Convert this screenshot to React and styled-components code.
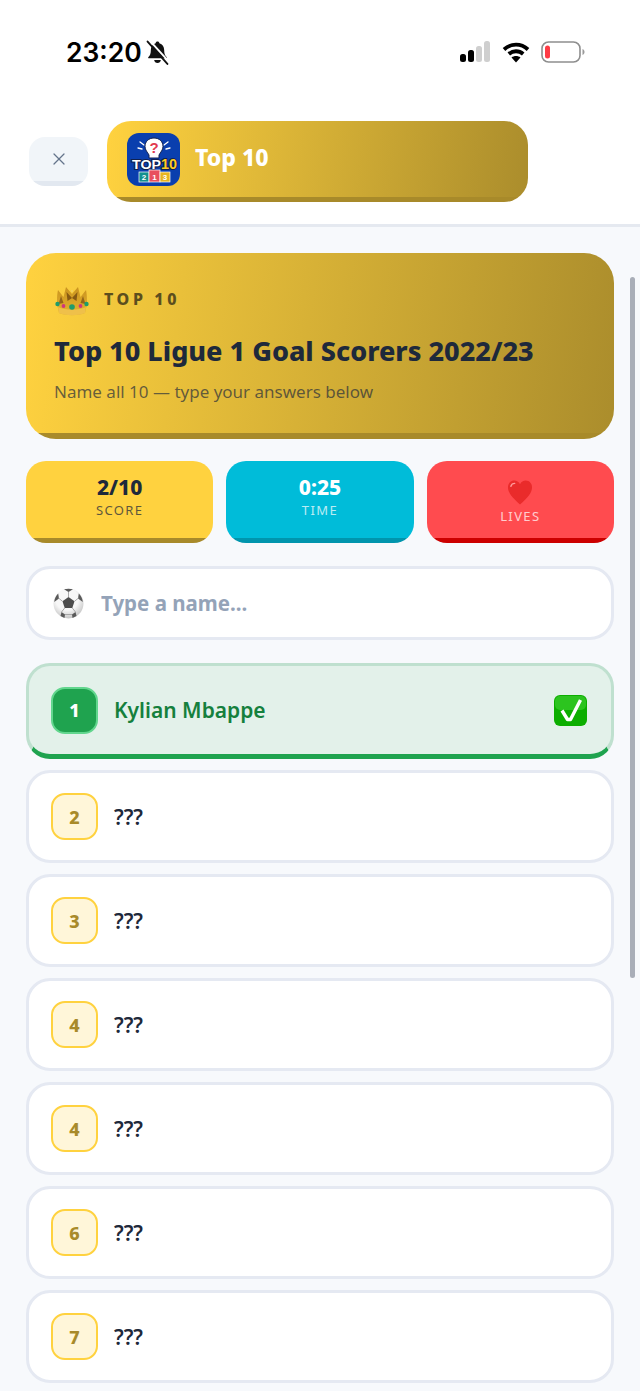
import React from 'react';
import styled, { createGlobalStyle } from 'styled-components';
import { X } from 'lucide-react';

const GlobalStyle = createGlobalStyle`
  html, body {
    margin: 0;
    padding: 0;
    background: #f7f9fc;
  }
  * {
    box-sizing: border-box;
  }
`;

const GOLD = 'linear-gradient(97deg, #ffd23f 0%, #ab8d2c 100%)';

// flat strip along the bottom edge, clipped by the corners of the card
const edgeStrip = (color, size) =>
  `linear-gradient(${color}, ${color}) bottom / 100% ${size}px no-repeat`;

// --- Page ---

const Page = styled.div`
  position: relative;
  width: 640px;
  height: 1391px;
  overflow: hidden;
  display: flex;
  flex-direction: column;
  background: #f7f9fc;
  font-family: 'Noto Sans', 'Open Sans', sans-serif;
  color: #1e293b;
`;

const StatusBar = styled.div`
  height: 100px;
  flex-shrink: 0;
  background: #fff;
  display: flex;
  justify-content: space-between;
  align-items: flex-start;
  padding: 36px 55px 0 66px;
`;

const StatusLeft = styled.div`
  display: flex;
  align-items: center;
  gap: 3px;
`;

const Clock = styled.span`
  font-family: Inter, sans-serif;
  font-size: 26.5px;
  line-height: 32px;
  font-weight: 600;
  color: #000;
`;

const StatusRight = styled.div`
  display: flex;
  align-items: center;
  gap: 11px;
  padding-top: 5px;
`;

const Header = styled.header`
  flex-shrink: 0;
  background: #fff;
  border-bottom: 3px solid #e5e9f0;
  display: flex;
  align-items: center;
  gap: 19px;
  padding: 21px 0 22px 29px;
`;

const CloseButton = styled.button`
  width: 59px;
  height: 49px;
  padding: 0 0 5px;
  border: 0;
  border-radius: 16px;
  background: ${edgeStrip('#e2e8f0', 5)}, #f1f5f9;
  color: #64748b;
  display: flex;
  align-items: center;
  justify-content: center;
`;

const GamePill = styled.div`
  width: 421px;
  height: 81px;
  border-radius: 24px;
  background: ${edgeStrip('#a88a2a', 5)}, ${GOLD};
  display: flex;
  align-items: center;
  gap: 15px;
  padding: 0 0 5px 20px;
`;

const GameName = styled.span`
  font-size: 23px;
  font-weight: 800;
  color: #fff;
  padding-bottom: 4px;
`;

const Content = styled.main`
  display: flex;
  flex-direction: column;
  padding: 26px 26px 0;
`;

// --- Hero ---

const Hero = styled.section`
  height: 186px;
  border-radius: 30px;
  background: ${edgeStrip('#a88a2a', 6)}, ${GOLD};
  padding: 30px 28px 0;
`;

const HeroTag = styled.div`
  display: flex;
  align-items: center;
  gap: 14px;
  height: 32px;
  font-size: 16px;
  font-weight: 800;
  letter-spacing: 3.6px;
  color: #5c4e1e;
`;

const CrownSlot = styled.span`
  display: flex;
  padding-top: 4px;
`;

const HeroTitle = styled.h1`
  margin: 18px 0 0;
  font-size: 27px;
  line-height: 36px;
  font-weight: 800;
  color: #1e293b;
  white-space: nowrap;
`;

const HeroText = styled.p`
  margin: 11px 0 0;
  font-size: 17px;
  line-height: 24px;
  color: rgba(30, 41, 59, 0.68);
`;

// --- Stats ---

const Stats = styled.div`
  display: grid;
  grid-template-columns: repeat(3, 1fr);
  gap: 13px;
  margin-top: 22px;
`;

const Stat = styled.div`
  height: 82px;
  border-radius: 20px;
  background: ${({ $edge, $bg }) => `${edgeStrip($edge, 5)}, ${$bg}`};
  color: ${({ $fg }) => $fg};
  display: flex;
  flex-direction: column;
  align-items: center;
  padding-top: ${({ $tall }) => ($tall ? '19px' : '12px')};
`;

const StatValue = styled.div`
  font-size: 21px;
  line-height: 28px;
  font-weight: 800;
`;

const StatLabel = styled.div`
  margin-top: ${({ $tall }) => ($tall ? '2px' : '0')};
  font-size: 13px;
  line-height: 18px;
  letter-spacing: 1.4px;
  opacity: 0.72;
`;

// --- Input ---

const SearchBox = styled.label`
  height: 74px;
  margin-top: 23px;
  border: 3px solid #e5e9f2;
  border-radius: 24px;
  background: #fff;
  display: flex;
  align-items: center;
  gap: 17px;
  padding: 0 24px;
`;

const SearchInput = styled.input`
  flex: 1;
  min-width: 0;
  border: 0;
  outline: 0;
  padding: 0;
  background: transparent;
  font-family: inherit;
  font-size: 20.5px;
  font-weight: 700;
  color: #1e293b;

  &::placeholder {
    color: #94a3b8;
    opacity: 1;
  }
`;

// --- Answers ---

const Answers = styled.div`
  display: flex;
  flex-direction: column;
  gap: 11px;
  margin-top: 23px;
`;

const Row = styled.div`
  flex-shrink: 0;
  height: ${({ $found }) => ($found ? '96px' : '93px')};
  border: 3px solid ${({ $found }) => ($found ? '#bfe0cf' : '#e5e9f2')};
  border-bottom: ${({ $found }) => ($found ? '5px solid #1fa34f' : '3px solid #e5e9f2')};
  border-radius: 24px;
  background: ${({ $found }) => ($found ? '#e3f1ea' : '#fff')};
  display: flex;
  align-items: center;
  gap: 16px;
  padding: 0 24px 0 22px;
`;

const Rank = styled.div`
  width: 47px;
  height: 47px;
  flex-shrink: 0;
  border: 2px solid ${({ $found }) => ($found ? '#62d68e' : '#ffd23f')};
  border-radius: 14px;
  background: ${({ $found }) => ($found ? '#1fa34f' : '#fff6d9')};
  color: ${({ $found }) => ($found ? '#fff' : '#a88a2a')};
  display: flex;
  align-items: center;
  justify-content: center;
  font-size: 18px;
  font-weight: 800;
`;

const Name = styled.span`
  flex: 1;
  font-size: 21px;
  font-weight: 600;
  color: ${({ $found }) => ($found ? '#15803d' : '#1e293b')};
`;

const ScrollThumb = styled.div`
  position: absolute;
  top: 277px;
  right: 5px;
  width: 5px;
  height: 701px;
  border-radius: 3px;
  background: #a9aeb8;
`;

// --- Drawings ---

const BellSlash = () => (
  <svg width="25" height="25" viewBox="0 0 24 24">
    <path d="M12 1.500c1 0 1.700.6 1.800 1.500 3 .8 4.600 3.300 4.600 6.500 0 3.300.7 5.300 2.300 6.700.6.500.2 1.400-.5 1.400H3.800c-.7 0-1.100-.9-.5-1.400 1.600-1.400 2.300-3.400 2.300-6.700 0-3.200 1.600-5.700 4.600-6.500.1-.9.8-1.500 1.800-1.500z" fill="#111" />
    <path d="M8.800 19.200h6.400c-.2 1.700-1.500 2.900-3.200 2.900s-3-1.200-3.200-2.900z" fill="#111" />
    <path d="M4.500 .5 24 22" stroke="#fff" strokeWidth="1.800" />
    <path d="M2.500 1.500 21.500 23" stroke="#111" strokeWidth="1.800" strokeLinecap="round" />
  </svg>
);

const SignalIcon = () => (
  <svg width="32" height="22" viewBox="0 0 32 22">
    <rect x="1" y="13" width="6" height="8" rx="2.500" fill="#000" />
    <rect x="9" y="9" width="6" height="12" rx="2.500" fill="#000" />
    <rect x="17" y="5" width="6" height="16" rx="2.500" fill="#cfcfcf" />
    <rect x="25" y="0" width="6" height="21" rx="2.500" fill="#cfcfcf" />
  </svg>
);

const WifiIcon = () => (
  <svg width="28" height="21" viewBox="0 0 28 21" fill="none" stroke="#000" strokeWidth="3.800">
    <path d="M2 7.500C9 1 19 1 26 7.500" />
    <path d="M6.800 12C11 8.300 17 8.300 21.200 12" />
    <path d="M14 20.500 9.500 15.500c2.600-2 6.400-2 9 0z" fill="#000" stroke="none" />
  </svg>
);

const BatteryIcon = () => (
  <svg width="44" height="22" viewBox="0 0 44 22">
    <rect x="1" y="1" width="38" height="20" rx="6.500" fill="#fff" stroke="#8e8e8e" strokeWidth="1.600" />
    <rect x="4" y="4.500" width="5" height="13" rx="2.500" fill="#ff3b45" />
    <path d="M41.500 8v6c1.300-.5 2-1.700 2-3s-.7-2.500-2-3z" fill="#9a9a9a" />
  </svg>
);

const GameLogo = () => (
  <svg width="53" height="53" viewBox="0 0 53 53">
    <rect width="53" height="53" rx="12" fill="#0a3fae" />
    <g stroke="#fff" strokeWidth="1.300" strokeLinecap="round">
      <path d="M13 9l4 3M11 15l4 1M41 9l-4 3M43 15l-4 1" />
    </g>
    <path d="M27 5c5.500 0 9 3.700 9 8.500 0 3.500-2.400 5.500-4 8.500V25h-10v-3c-1.600-3-4-5-4-8.500C18 8.700 21.500 5 27 5z" fill="#fff" stroke="#10204f" strokeWidth="1" />
    <text x="27" y="20" textAnchor="middle" fontFamily="'Liberation Sans', sans-serif" fontSize="15" fontWeight="700" fill="#e23a4e">?</text>
    <g fontFamily="'Liberation Sans', sans-serif" fontWeight="700" stroke="#10204f" strokeWidth="2.200" style={{ paintOrder: 'stroke' }}>
      <text x="5" y="36" fontSize="13" fill="#fff" textLength="29" lengthAdjust="spacingAndGlyphs">TOP</text>
      <text x="34" y="36" fontSize="15" fill="#ffcc22" textLength="16" lengthAdjust="spacingAndGlyphs">10</text>
    </g>
    <rect x="12" y="39" width="10" height="10" fill="#14908f" stroke="#fff" strokeWidth="0.700" />
    <rect x="22" y="37" width="11" height="12" fill="#e8505e" stroke="#fff" strokeWidth="0.700" />
    <rect x="33" y="39" width="10" height="10" fill="#e8b520" stroke="#fff" strokeWidth="0.700" />
    <g fontFamily="'Liberation Sans', sans-serif" fontSize="8" fontWeight="700" textAnchor="middle" fill="#fff">
      <text x="17" y="47">2</text>
      <text x="27.500" y="47">1</text>
      <text x="38" y="47">3</text>
    </g>
  </svg>
);

const CrownIcon = () => (
  <svg width="36" height="30" viewBox="0 0 36 30">
    <defs>
      <linearGradient id="crownGold" x1="0" y1="0" x2="0" y2="1">
        <stop offset="0" stopColor="#c9921f" />
        <stop offset="1" stopColor="#e6b52e" />
      </linearGradient>
    </defs>
    <path d="M3 18C3 12 3 9 4 4l5.500 7L12 1l6 7 6-7 2.500 10L32 4c1 5 1 8 1 14l-2 9c-7 3-19 3-26 0z" fill="url(#crownGold)" />
    <path d="M7 10l2.500 7-5 1zM29 10l-2.500 7 5 1z" fill="#95661a" />
    <path d="M12.500 6l1 9 4.500-3zM23.500 6l-1 9-4.500-3z" fill="#875a12" />
    <path d="M4 21c8 3.500 20 3.500 28 0l-1 6c-7 3-19 3-26 0z" fill="#efc04a" />
    <circle cx="18" cy="5" r="1" fill="#f3d067" />
    <circle cx="3.500" cy="18" r="2.200" fill="#1f9c6b" />
    <circle cx="32.500" cy="18" r="2.200" fill="#1f9c6b" />
    <circle cx="9.500" cy="20" r="1.900" fill="#d0357f" />
    <circle cx="26.500" cy="20" r="1.900" fill="#d0357f" />
    <circle cx="18" cy="21" r="2.800" fill="#1f9c6b" />
  </svg>
);

const HeartIcon = () => (
  <svg width="26" height="25" viewBox="0 0 27 26">
    <path d="M13.500 25.500C5 18 1 13 1 7.500 1 3.500 3.800.5 7.500.5c2.600 0 4.800 1.400 6 3.800C14.700 1.900 16.900.5 19.500.5c3.700 0 6.500 3 6.500 7 0 5.500-4 10.500-12.500 18z" fill="#ea2b2b" />
    <path d="M4 6.500C4.600 4.500 6 3.500 8 3.500" stroke="#ff9a9a" strokeWidth="1.500" fill="none" strokeLinecap="round" />
  </svg>
);

const BallIcon = () => (
  <svg width="31" height="31" viewBox="0 0 31 31">
    <defs>
      <radialGradient id="ballShade" cx="0.45" cy="0.35" r="0.75">
        <stop offset="0.5" stopColor="#f7f7f7" />
        <stop offset="1" stopColor="#b5b5b5" />
      </radialGradient>
    </defs>
    <circle cx="15.500" cy="15.500" r="15" fill="url(#ballShade)" />
    <path d="M15.500 9l6 4.300-2.200 6.700h-7.600l-2.200-6.700z" fill="#4d4d4d" />
    <path d="M11 1.300c3-.9 6-.9 9 0l-4.500 2.700zM1.200 14c.3-3.600 1.800-6.500 4-8.500l.8 5zM29.800 14c-.3-3.600-1.800-6.500-4-8.500l-.8 5zM7.500 28l4 2 .5-3.500-3.500-2.500zM23.500 28l-4 2-.5-3.500 3.500-2.500z" fill="#5a5a5a" />
    <path d="M15.500 4v5M9.500 13.300 5.500 10M21.500 13.300l4-3.300M11.700 20 8.500 24M19.300 20l3.200 4M12 26.500h7" stroke="#a0a0a0" strokeWidth="0.900" fill="none" />
  </svg>
);

const CheckIcon = () => (
  <svg width="33" height="31" viewBox="0 0 33 31">
    <rect width="33" height="31" rx="6" fill="#0cae00" />
    <rect x="1" y="1" width="31" height="14" rx="5" fill="#2cc41f" />
    <path d="M8 15.500l5.500 9h3L26.500 5" fill="none" stroke="#fff" strokeWidth="3.400" strokeLinejoin="round" />
  </svg>
);

// --- Data ---

const stats = [
  { value: '2/10', label: 'SCORE', bg: '#ffd23f', fg: '#1e293b', edge: '#a88a2a' },
  { value: '0:25', label: 'TIME', bg: '#00bcd9', fg: '#fff', edge: '#0095ad' },
  { icon: true, label: 'LIVES', bg: '#ff4b4f', fg: '#fff', edge: '#cc0000' },
];

const answers = [
  { rank: 1, name: 'Kylian Mbappe', found: true },
  { rank: 2, name: '???' },
  { rank: 3, name: '???' },
  { rank: 4, name: '???' },
  { rank: 4, name: '???' },
  { rank: 6, name: '???' },
  { rank: 7, name: '???' },
];

function App() {
  return (
    <Page>
      <GlobalStyle />
      <StatusBar>
        <StatusLeft>
          <Clock>23:20</Clock>
          <BellSlash />
        </StatusLeft>
        <StatusRight>
          <SignalIcon />
          <WifiIcon />
          <BatteryIcon />
        </StatusRight>
      </StatusBar>

      <Header>
        <CloseButton aria-label="Close">
          <X size={20} strokeWidth={1.5} />
        </CloseButton>
        <GamePill>
          <GameLogo />
          <GameName>Top 10</GameName>
        </GamePill>
      </Header>

      <Content>
        <Hero>
          <HeroTag>
            <CrownSlot>
              <CrownIcon />
            </CrownSlot>
            TOP 10
          </HeroTag>
          <HeroTitle>Top 10 Ligue 1 Goal Scorers 2022/23</HeroTitle>
          <HeroText>Name all 10 — type your answers below</HeroText>
        </Hero>

        <Stats>
          {stats.map((stat) => (
            <Stat key={stat.label} $bg={stat.bg} $fg={stat.fg} $edge={stat.edge} $tall={stat.icon}>
              {stat.icon ? <HeartIcon /> : <StatValue>{stat.value}</StatValue>}
              <StatLabel $tall={stat.icon}>{stat.label}</StatLabel>
            </Stat>
          ))}
        </Stats>

        <SearchBox>
          <BallIcon />
          <SearchInput placeholder="Type a name..." />
        </SearchBox>

        <Answers>
          {answers.map((answer, index) => (
            <Row key={index} $found={answer.found}>
              <Rank $found={answer.found}>{answer.rank}</Rank>
              <Name $found={answer.found}>{answer.name}</Name>
              {answer.found && <CheckIcon />}
            </Row>
          ))}
        </Answers>
      </Content>

      <ScrollThumb />
    </Page>
  );
}

export default App;
